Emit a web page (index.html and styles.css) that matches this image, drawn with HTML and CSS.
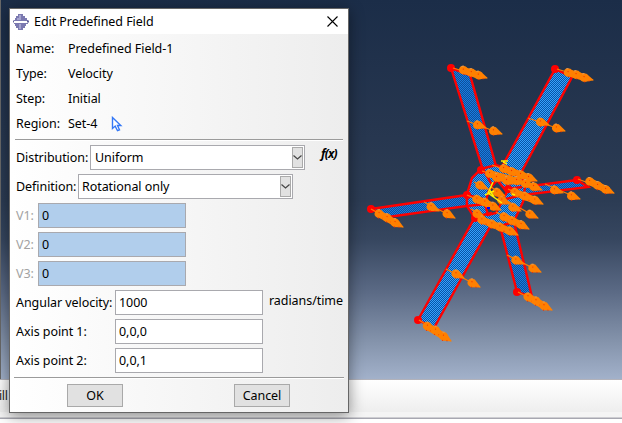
FILE: index.html
```
<!DOCTYPE html>
<html lang="en">
<head>
<meta charset="utf-8">
<title>Edit Predefined Field</title>
<link rel="stylesheet" href="styles.css">
</head>
<body>
<main class="desktop">
  <section class="viewport">
    <svg class="model" id="model" width="622" height="379" viewBox="0 0 622 379">
      <defs>
        <pattern id="mesh" width="2" height="2" patternUnits="userSpaceOnUse">
          <rect width="2" height="2" fill="#0755a8"/>
          <path d="M0 0h1v1h-1zM1 1h1v1h-1z" fill="#36a0fb"/>
        </pattern>
        <pattern id="meshDark" width="2" height="2" patternUnits="userSpaceOnUse">
          <rect width="2" height="2" fill="#104f9b"/>
          <path d="M0 0h1v1h-1zM1 1h1v1h-1z" fill="#187ce0"/>
        </pattern>
      </defs>
      <g class="arms">
        <path class="dark" d="M451 68 483 170 496 166 470 75z"/>
        <path class="dark" d="M517 292 500 226 514 222 532 297z"/>
        <path class="dark" d="M371 209 467 195V206L388 217z"/>
        <path class="dark" d="M577 180 508 189 515 196 588 187z"/>
        <path d="M555 69 503 165 521 173 572 77z"/>
        <path d="M418 320 475 217 496 216 434 328z"/>
        <path fill-rule="evenodd" d="M481 169 496 165 521 173 525 187 523 202 514 221 496 228 474 217 467 206V194L472 178zM497 180 489 190 485 204 488 215 496 213 507 192z"/>
        <path d="M483 169 492 185M467 195 486 200M467 206 486 204M474 217 492 213M508 189 522 187M506 199 522 195"/>
      </g>
      <g class="nodes">
        <circle cx="451" cy="68" r="4"/><circle cx="555" cy="69" r="4"/><circle cx="371" cy="209" r="4"/><circle cx="577" cy="180" r="4"/><circle cx="418" cy="320" r="4"/><circle cx="517" cy="292" r="4"/>
        <circle cx="481" cy="170" r="4"/><circle cx="467" cy="195" r="4"/><circle cx="508" cy="189" r="4"/><circle cx="475" cy="218" r="4"/>
      </g>
      <g id="arrows"></g>
      <path class="axes" d="M501 161h7M503 162l4 2M493 182 488 193 502 203M485 195l9-4M489 189l5 8M512 194l3 1"/>
      <path d="M487 208h3" stroke="#00f" stroke-width="2"/>
    </svg>
  </section>
  <footer class="prompt"><span>ill</span></footer>

  <section class="dialog">
    <header class="titlebar">
      <svg class="logo" width="16" height="16" viewBox="0 0 16 16">
        <path d="M5 0h5v2h2v2h2v2h1v1H1V6h1V4h1V2h2zM1 9h14v1h-2v2h-1v2h-2v2H5v-2H3v-2H2v-2H1z" fill="#7b79b0"/>
        <path d="M6 1h2v5H4V4h2zM6 10h2v5H6z" fill="#a5a4ce"/>
        <path d="M0 7.5h1M14 7.5h2" stroke="#62619b" stroke-width="2"/>
      </svg>
      <h1>Edit Predefined Field</h1>
      <svg class="close" width="11" height="11" viewBox="0 0 11 11"><path d="M.5.5l10 10M10.5.5l-10 10"/></svg>
    </header>
    <div class="body">
      <dl class="info">
        <dt>Name:</dt><dd class="fieldname">Predefined Field-1</dd>
        <dt>Type:</dt><dd>Velocity</dd>
        <dt>Step:</dt><dd>Initial</dd>
        <dt>Region:</dt>
        <dd>Set-4
          <svg class="pointer" width="12" height="16" viewBox="0 0 12 16"><path d="M1.5 1.5v11l2.7-2.4 2.3 4.6 2-.9-2-4.3h3.3z"/></svg>
        </dd>
      </dl>
      <hr class="rule">
      <div class="row combos">
        <label class="dist">Distribution:</label>
        <div class="box combo"><span class="uniform">Uniform</span><i class="drop"><svg width="9" height="5" viewBox="0 0 9 5"><path d="M.5.5l4 3.5 4-3.5"/></svg></i></div>
        <em class="fx">f(x)</em>
      </div>
      <div class="row">
        <label class="def">Definition:</label>
        <div class="box combo"><span class="rot">Rotational only</span><i class="drop"><svg width="9" height="5" viewBox="0 0 9 5"><path d="M.5.5l4 3.5 4-3.5"/></svg></i></div>
      </div>
      <div class="row off"><label>V1:</label><div class="box">0</div></div>
      <div class="row off"><label>V2:</label><div class="box">0</div></div>
      <div class="row off"><label>V3:</label><div class="box">0</div></div>
      <div class="row axis"><label class="ang">Angular velocity:</label><div class="box">1000</div><span class="unit">radians/time</span></div>
      <div class="row axis"><label>Axis point 1:</label><div class="box">0,0,0</div></div>
      <div class="row axis"><label>Axis point 2:</label><div class="box">0,0,1</div></div>
      <hr class="rule wide">
      <div class="actions"><button>OK</button><button>Cancel</button></div>
    </div>
  </section>
</main>
<script src="model.js"></script>
</body>
</html>
```
FILE: styles.css
```
* { box-sizing: border-box; }
body { margin: 0; font: 12.5px/16px "Noto Sans", "Open Sans", sans-serif; letter-spacing: -.06px; color: #000; }
.desktop { position: relative; width: 622px; height: 423px; overflow: hidden; background: #fff; }
.viewport { height: 379px; border-left: 1px solid #686868; background: linear-gradient(#1b2d48, #26364f 33%, #2c3c54 53%, #36465f 63%, #5b6a85 77%, #8493ab 90%, #a2b1ca); }
.model { display: block; margin-left: -1px; }
.arms path { fill: url(#mesh); stroke: #f00; stroke-width: 2.4; }
.arms .dark { fill: url(#meshDark); }
.arms path:last-child { fill: none; }
.nodes { fill: #f00; }
.axes { fill: none; stroke: #fff000; stroke-width: 1.5; }
.cone { fill: #ff8000; }
.shaft { stroke: #ff7a00; stroke-width: 1.3; }
.core { stroke: #ff8000; stroke-width: 7; }
.speck { stroke: #f22800; stroke-width: 1; }
.glint { stroke: #e09a58; stroke-width: 1; }
.prompt { height: 40px; border-top: 1px solid #b2b2ba; border-bottom: 1px solid #a7a7b1; background: linear-gradient(#fff, #eee 32px, #f4f4f4 32px, #f4f4f4 37px, #cdcdd1 37px); padding-top: 8px; }
.prompt span { display: block; margin-left: -1px; letter-spacing: -.4px; color: #222; }
.dialog { position: absolute; left: 9px; top: 8px; width: 340px; height: 405px; border: 1px solid #666; background: linear-gradient(90deg, #fff, #ededed); box-shadow: 0 3px 14px rgba(0,0,0,.45); }
.titlebar { height: 25px; display: flex; align-items: center; background: #fff; padding: 0 10px 0 3px; }
.titlebar h1 { flex: 1; margin: 0 0 0 5px; font-size: 12.5px; font-weight: 400; }
.close path { fill: none; stroke: #000; stroke-width: 1.1; }
.body { padding: 2px 5px 0 6px; }
.info { display: grid; grid-template-columns: 52px 1fr; grid-auto-rows: 25px; align-items: center; margin: 0 0 3px; }
.info dd { margin: 0; display: flex; align-items: center; gap: 14px; }
.pointer path { fill: #fff; stroke: #3478f6; stroke-width: 1.4; }
.rule { height: 2px; margin: 0 0 4px -1px; border: 0; background: linear-gradient(#9b9b9b 50%, #fff 50%); }
.rule.wide { margin: 0 0 0 -2px; width: 330px; }
.row { height: 25px; margin-bottom: 4px; display: flex; align-items: center; }
.row label { flex: none; white-space: nowrap; }
.box { flex: none; width: 148px; height: 25px; border: 1px solid #a9a9ae; background: #fff; padding: 4px 3px; line-height: 16px; }
.box.combo { width: 215px; padding: 1px; display: flex; justify-content: space-between; align-items: center; }
.combo span { padding-left: 2px; }
.combo .uniform { padding-left: 3px; }
.drop { width: 11px; height: 21px; border: 1px solid #aaa; background: #e1e1e1; display: grid; place-items: center; }
.drop path { fill: none; stroke: #444; stroke-width: 1.2; }
.dist { width: 74px; }
.def { width: 62px; }
.fx { margin: -8px 0 0 16px; font: italic bold 12px/16px "Open Sans", sans-serif; letter-spacing: -.8px; transform: scaleY(1.1); }
.off label { width: 22px; color: #a2a2a2; }
.off .box { background: #b1ceec; }
.axis label { width: 99px; }
.unit { margin: -4px 0 0 6px; white-space: nowrap; }
.actions { display: flex; gap: 111px; padding: 5px 0 0 51px; }
.actions button { width: 56px; height: 23px; border: 1px solid #a9a9a9; background: #e1e1e1; padding: 0; font: inherit; letter-spacing: inherit; color: #000; }
```
FILE: model.js
```
// Velocity arrows: shaft start and angle, followed by the cone tips.
const arrows = [
  [453,68,18, 472,73, 480,75.5, 487,78],
  [467,121,20, 486,128, 502,134],
  [557,69,15, 577,75, 585,77, 593,80],
  [528,118,19, 549,125, 565,131],
  [371,209,28, 387,218, 395,222, 403,227],
  [424,202,28, 439,211, 455,218],
  [578,179,23, 598,185, 606,189, 614,193],
  [545,184,20, 563,193, 580,199],
  [419,320,32, 435,331, 443,335, 451,341],
  [446,269,27, 464,278, 480,287],
  [518,292,27, 536,301, 544,305, 552,310],
  [507,255,25, 524,264, 541,272],
  [492,165,22, 512,172, 520,175, 529,178, 537,181],
  [482,171,22, 498,177, 505,181, 515,184, 525,184],
  [519,180,22, 534,187, 542,190],
  [474,182,25, 488,189],
  [491,187,25, 505,196],
  [508,189,25, 523,196, 533,200, 543,204],
  [467,195,25, 485,203, 493,206, 501,210],
  [496,195,25, 510,204, 521,211, 538,218],
  [471,209,28, 485,218],
  [496,212,28, 512,221, 520,225, 529,229],
  [474,216,26, 490,224, 500,228, 508,231, 518,235]
];
document.getElementById("arrows").innerHTML = arrows.map(([x, y, angle, ...tips]) => {
  const dx = Math.cos(angle * Math.PI / 180), dy = Math.sin(angle * Math.PI / 180);
  let out = `<path class="shaft" d="M${x} ${y}L${tips.at(-2)} ${tips.at(-1)}"/>`;
  if (tips.length > 4 && tips.at(-2) - tips.at(-4) < 12) {
    out += `<path class="core" d="M${tips[0] - 9 * dx} ${tips[1] - 9 * dy}L${tips.at(-2) - 6 * dx} ${tips.at(-1) - 6 * dy}"/>`;
  }
  for (let i = 0; i < tips.length; i += 2) {
    out += `<g transform="translate(${tips[i]} ${tips[i + 1]}) rotate(${angle})"><path class="cone" d="M1 0-8-4.3Q-13.5-4.5-13.5 0-13.5 4.5-8 4.3z"/><path class="speck" d="M-8 4h1M-4 2h1M-10-1h1"/><path class="glint" d="M-12-3l2-1"/></g>`;
  }
  return out;
}).join("");
```
